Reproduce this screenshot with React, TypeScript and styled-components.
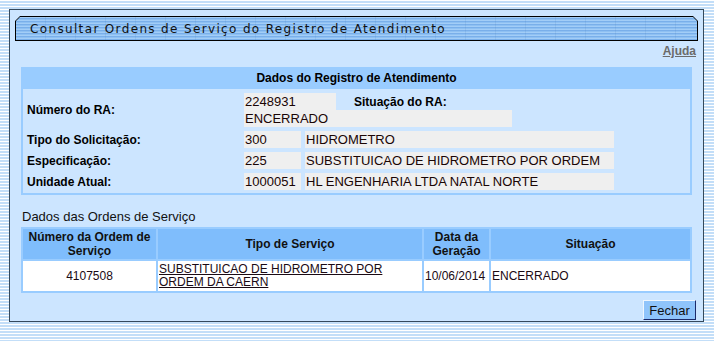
import styled, { createGlobalStyle } from "styled-components"

const GlobalStyle = createGlobalStyle`
    html, body {
        margin: 0;
        padding: 0;
    }
    body {
        min-height: 341px;
        font-family: "Liberation Sans", Arial, sans-serif;
        background: repeating-linear-gradient(
            to bottom,
            #ffffff 0px,
            #ffffff 1px,
            #c3def8 1px,
            #c3def8 3px
        );
    }
`

const Page = styled.div`
    padding: 9px 11px 16px 9px;
`

const Panel = styled.div`
    width: 683px;
    background: #cce5ff;
    border: 1px solid #34495c;
    padding: 6px 5px 0 5px;
    box-sizing: content-box;
`

const TitleFrame = styled.div`
    height: 25px;
    background: #000;
    padding: 1px;
    box-sizing: border-box;
    clip-path: polygon(5px 0, calc(100% - 5px) 0, 100% 5px, 100% 100%, 0 100%, 0 5px);
`

const TitleBar = styled.div`
    height: 100%;
    clip-path: polygon(4px 0, calc(100% - 4px) 0, 100% 4px, 100% 100%, 0 100%, 0 4px);
    background:
        repeating-linear-gradient(to right, transparent 0, transparent 29px, rgba(60, 110, 170, 0.12) 29px, rgba(60, 110, 170, 0.12) 30px),
        repeating-linear-gradient(to bottom, #a2cdf7 0, #a2cdf7 1px, #79afea 1px, #79afea 2px, #8ec0f2 2px, #8ec0f2 3px);
    display: flex;
    align-items: center;
    padding-left: 14px;
    font-family: "DejaVu Sans", Verdana, sans-serif;
    font-size: 12px;
    letter-spacing: 1.35px;
    color: #111;
`

const HelpRow = styled.div`
    display: flex;
    justify-content: flex-end;
    height: 20px;
    align-items: center;
    padding-right: 2px;
`

const HelpLink = styled.a`
    font-weight: bold;
    font-size: 12px;
    color: #6b6b6b;
    text-decoration: underline;
    cursor: pointer;
`

const Content = styled.div`
    padding: 0 5px 0 6px;
`

const DataBox = styled.div`
    margin-top: 6px;
    border: 2px solid #99ccff;
    border-top: 0;
    width: 671px;
    box-sizing: border-box;
`

const BoxHeader = styled.div`
    height: 22px;
    background: #99ccff;
    display: flex;
    align-items: center;
    justify-content: center;
    font-weight: bold;
    font-size: 12px;
    color: #000;
`

const FormGrid = styled.div`
    display: grid;
    grid-template-columns: 221px 1fr;
    row-gap: 4px;
    padding: 4px 0 3px 0;
`

const Label = styled.div`
    font-weight: bold;
    font-size: 12px;
    color: #000;
    padding-left: 4px;
    display: flex;
    align-items: center;
`

const FieldGroup = styled.div`
    display: flex;
    flex-direction: column;
`

const FieldLine = styled.div`
    display: flex;
    align-items: center;
    gap: 4px;
`

const Field = styled.div<{ $w: number }>`
    width: ${p => p.$w}px;
    height: 17px;
    background: #efefef;
    font-size: 13px;
    line-height: 17px;
    color: #1a0505;
    padding-left: 1px;
    white-space: nowrap;
    overflow: hidden;
    box-sizing: border-box;
`

const InlineLabel = styled.span`
    font-weight: bold;
    font-size: 12px;
    color: #000;
    margin-left: 14px;
`

const SectionTitle = styled.div`
    font-size: 13px;
    line-height: 15px;
    color: #111;
    margin: 14px 0 3px 1px;
`

const OrdersTable = styled.table`
    width: 671px;
    border-collapse: separate;
    border-spacing: 2px;
    background: #99ccff;
    font-size: 12px;
`

const HeadCell = styled.th<{ $w?: number }>`
    background: #7fbdfc;
    font-weight: bold;
    text-align: center;
    height: 30px;
    padding: 0;
    line-height: 14px;
    color: #111;
    width: ${p => (p.$w ? `${p.$w}px` : "auto")};
`

const BodyCell = styled.td<{ $align?: string }>`
    background: #fff;
    height: 30px;
    padding: 0 1px;
    text-align: ${p => p.$align || "left"};
    line-height: 13px;
    color: #1a0a14;
`

const ServiceLink = styled.a`
    color: #1a0a14;
    text-decoration: underline;
    cursor: pointer;
`

const Footer = styled.div`
    display: flex;
    justify-content: flex-end;
    padding: 7px 2px 1px 0;
`

const Button = styled.button`
    width: 53px;
    height: 20px;
    background: #8fc4fb;
    border: 1px solid;
    border-color: #eef6ff #1c2a6a #1c2a6a #eef6ff;
    font-family: "Liberation Sans", Arial, sans-serif;
    font-size: 13px;
    color: #111;
    padding: 0;
    cursor: pointer;
`

const App = () => {
    return (
        <>
            <GlobalStyle />
            <Page>
                <Panel>
                    <TitleFrame>
                        <TitleBar>Consultar Ordens de Serviço do Registro de Atendimento</TitleBar>
                    </TitleFrame>
                    <HelpRow>
                        <HelpLink>Ajuda</HelpLink>
                    </HelpRow>
                    <Content>
                        <DataBox>
                            <BoxHeader>Dados do Registro de Atendimento</BoxHeader>
                            <FormGrid>
                                <Label>Número do RA:</Label>
                                <FieldGroup>
                                    <FieldLine>
                                        <Field $w={92}>2248931</Field>
                                        <InlineLabel>Situação do RA:</InlineLabel>
                                    </FieldLine>
                                    <Field $w={268}>ENCERRADO</Field>
                                </FieldGroup>

                                <Label>Tipo do Solicitação:</Label>
                                <FieldLine>
                                    <Field $w={57}>300</Field>
                                    <Field $w={309}>HIDROMETRO</Field>
                                </FieldLine>

                                <Label>Especificação:</Label>
                                <FieldLine>
                                    <Field $w={57}>225</Field>
                                    <Field $w={309}>SUBSTITUICAO DE HIDROMETRO POR ORDEM</Field>
                                </FieldLine>

                                <Label>Unidade Atual:</Label>
                                <FieldLine>
                                    <Field $w={57}>1000051</Field>
                                    <Field $w={309}>HL ENGENHARIA LTDA NATAL NORTE</Field>
                                </FieldLine>
                            </FormGrid>
                        </DataBox>

                        <SectionTitle>Dados das Ordens de Serviço</SectionTitle>
                        <OrdersTable>
                            <thead>
                                <tr>
                                    <HeadCell $w={133}>Número da Ordem de Serviço</HeadCell>
                                    <HeadCell $w={264}>Tipo de Serviço</HeadCell>
                                    <HeadCell $w={65}>Data da Geração</HeadCell>
                                    <HeadCell>Situação</HeadCell>
                                </tr>
                            </thead>
                            <tbody>
                                <tr>
                                    <BodyCell $align="center">4107508</BodyCell>
                                    <BodyCell>
                                        <ServiceLink>SUBSTITUICAO DE HIDROMETRO POR ORDEM DA CAERN</ServiceLink>
                                    </BodyCell>
                                    <BodyCell>10/06/2014</BodyCell>
                                    <BodyCell>ENCERRADO</BodyCell>
                                </tr>
                            </tbody>
                        </OrdersTable>
                    </Content>
                    <Footer>
                        <Button>Fechar</Button>
                    </Footer>
                </Panel>
            </Page>
        </>
    )
}

export default App
